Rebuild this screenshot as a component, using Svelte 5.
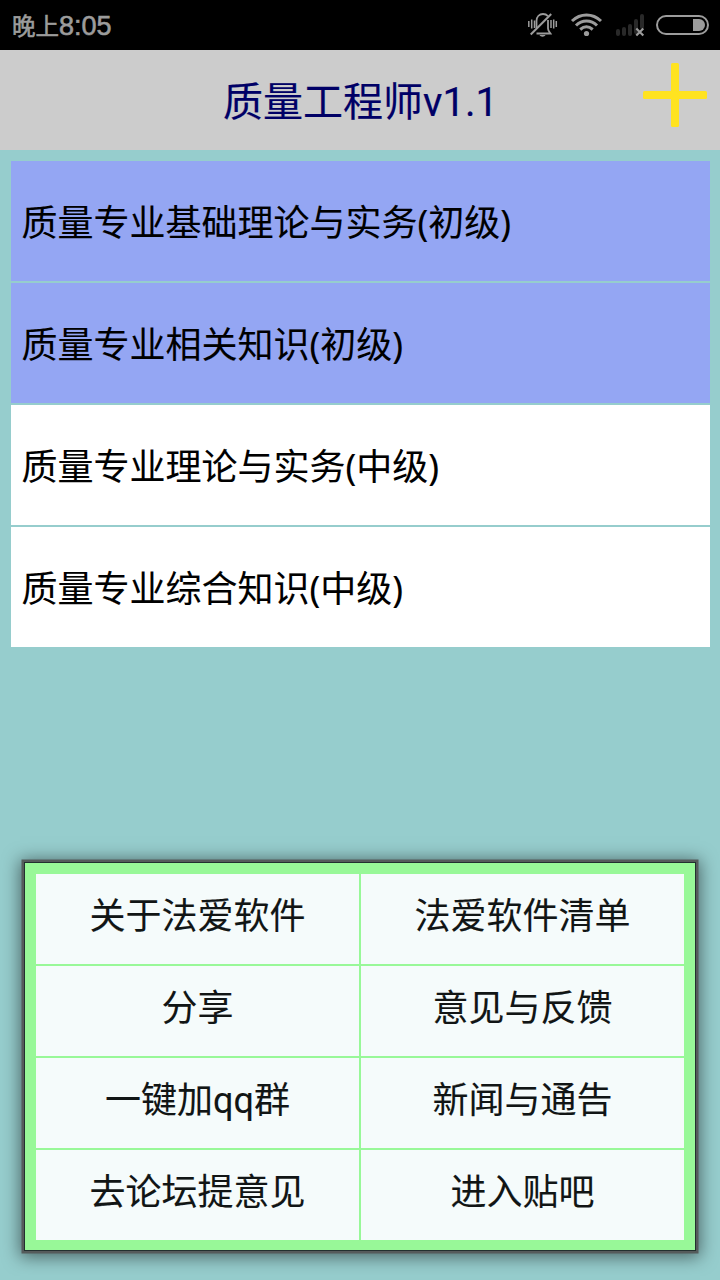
<script>
  let books = [
    { title: '质量专业基础理论与实务(初级)', active: true },
    { title: '质量专业相关知识(初级)', active: true },
    { title: '质量专业理论与实务(中级)', active: false },
    { title: '质量专业综合知识(中级)', active: false }
  ];

  let menu = [
    '关于法爱软件',
    '法爱软件清单',
    '分享',
    '意见与反馈',
    '一键加qq群',
    '新闻与通告',
    '去论坛提意见',
    '进入贴吧'
  ];
</script>

<main>
  <div class="status">
    <div class="time">晚上<span>8:05</span></div>
    <svg width="192" height="50" viewBox="0 0 192 50" fill="none" stroke="#9c9c9c">
      <!-- muted bell -->
      <g stroke-width="1.8">
        <path d="M.8 21v6M3.700 19.500v9M6.500 20.500v7.500M23 20v8M25.700 19.500v9M28.300 21v6" stroke-width="1.500" />
        <path d="M8.500 28V21c0-4.500 3-7 6.500-7 2 0 3.700.8 5 2.200M20 20v8.500c0 2 1.200 3 2.500 5H8.500" />
        <path d="M2.700 34.500L23.200 14" stroke-width="2" />
        <path d="M11.500 35h6c-1 2.200-5 2.200-6 0z" fill="#9c9c9c" stroke="none" />
      </g>
      <!-- wifi -->
      <g stroke-width="3">
        <path d="M44 21c8.500-8 20.500-8 29 0" />
        <path d="M48 25.500c6-6 15-6 21 0" />
        <path d="M52.200 29.500c4-3.500 8.500-3.500 12.500 0" />
        <circle cx="58.500" cy="33.500" r="2.600" fill="#9c9c9c" stroke="none" />
      </g>
      <!-- signal -->
      <path d="M90 31v3M96 29v5M102 26v8M108 21v11M114 16v11" stroke="#292929" stroke-width="4" stroke-linecap="round" />
      <path d="M108.300 28.500l7 7M115.300 28.500l-7 7" stroke-width="2.200" />
      <!-- battery -->
      <rect x="129" y="16" width="51" height="18" rx="9" stroke-width="2" />
      <path d="M165 19h6a6 6 0 0 1 0 12h-6z" fill="#9c9c9c" stroke="none" />
    </svg>
  </div>

  <header>
    <h1>质量工程师v1.1</h1>
    <button class="add" aria-label="add">
      <svg width="64" height="64" viewBox="0 0 64 64" fill="#ffe320">
        <rect x="28" y="0" width="8" height="64" rx="1.500" />
        <rect x="0" y="28" width="64" height="8" rx="1.500" />
      </svg>
    </button>
  </header>

  <ul class="books">
    {#each books as book}
      <li class:active={book.active}>{book.title}</li>
    {/each}
  </ul>

  <div class="menu">
    {#each menu as item}
      <button>{item}</button>
    {/each}
  </div>
</main>

<style>
  :global(body) {
    background: #96cdcd;
  }

  main {
    display: flex;
    flex-direction: column;
    box-sizing: border-box;
    width: 720px;
    height: 1280px;
    overflow: hidden;
    background: #96cdcd;
    font-family: "Noto Sans", "Noto Sans CJK SC", sans-serif;
    color: #000;
  }

  .status {
    display: flex;
    justify-content: space-between;
    align-items: center;
    height: 50px;
    padding-left: 12px;
    background: #000;
  }

  .status svg {
    display: block;
  }

  .time {
    font-size: 23.5px;
    line-height: 50px;
    font-family: "Noto Sans CJK SC", sans-serif;
    color: #9c9c9c;
    -webkit-text-stroke: 0.6px #9c9c9c;
  }

  .time span {
    font-family: "Liberation Sans", sans-serif;
    font-size: 27px;
  }

  header {
    display: grid;
    grid-template-columns: 78px 1fr 78px;
    align-items: center;
    height: 100px;
    background: #ccc;
  }

  h1 {
    grid-column: 2;
    margin: 0;
    padding: 6px 0 0 1px;
    text-align: center;
    font-family: Roboto, "Noto Sans CJK SC", sans-serif;
    font-size: 40px;
    line-height: 94px;
    font-weight: 400;
    color: #000066;
    -webkit-text-stroke: 0.2px #000066;
  }

  .add {
    padding: 0 0 11px 1px;
    border: none;
    background: none;
    text-align: left;
  }

  .add svg {
    display: block;
  }

  .books {
    display: grid;
    gap: 2px;
    margin: 11px 10px 0 11px;
    padding: 0;
    list-style: none;
  }

  .books li {
    height: 117px;
    padding: 3px 0 0 10.5px;
    background: #fff;
    font-size: 36px;
    line-height: 117px;
    -webkit-text-stroke: 0.1px #000;
  }

  .books li.active {
    background: #94a6f3;
  }

  .menu {
    display: grid;
    grid-template-columns: 1fr 1fr;
    grid-auto-rows: 90px;
    gap: 2px;
    margin: auto 24px 29px;
    padding: 11px 11px 10px;
    border: 1px solid #22302f;
    background: #98f898;
    box-shadow: 0 0 0 2.500px #555b5b, 0 2px 16px 4px rgba(0, 0, 0, 0.5);
  }

  .menu button {
    padding: 0 0 4px;
    border: none;
    background: #f5fbfb;
    font-family: Roboto, "Noto Sans CJK SC", sans-serif;
    font-size: 36px;
    line-height: 80px;
    color: #111515;
    -webkit-text-stroke: 0.1px #111515;
  }
</style>
